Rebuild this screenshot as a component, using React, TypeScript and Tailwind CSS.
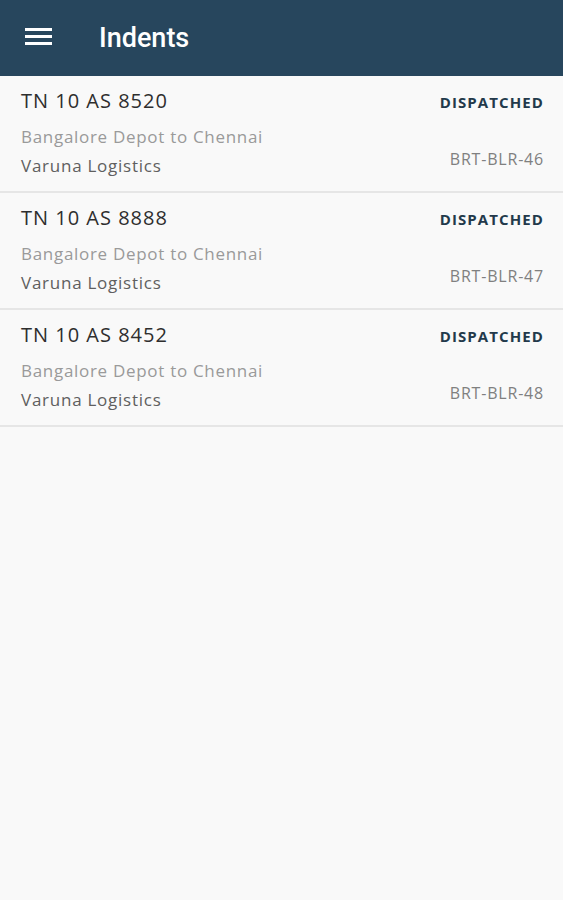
import React from "react";

const rows = [
  { plate: "TN 10 AS 8520", code: "BRT-BLR-46" },
  { plate: "TN 10 AS 8888", code: "BRT-BLR-47" },
  { plate: "TN 10 AS 8452", code: "BRT-BLR-48" },
];

export default function App() {
  return (
    <div className="w-[563px] h-[900px] bg-[#f9f9f9] flex flex-col" style={{ fontFamily: "'Open Sans', sans-serif" }}>
      <header className="h-[76px] bg-[#27465d] flex items-center shrink-0">
        <div className="ml-[25px] -mt-[3px] w-[27px] flex flex-col gap-[4px]">
          <div className="h-[3px] bg-white" />
          <div className="h-[3px] bg-white" />
          <div className="h-[3px] bg-white" />
        </div>
        <h1 className="ml-[47px] text-white text-[27px] leading-[32px] font-medium" style={{ fontFamily: "Roboto, sans-serif" }}>
          Indents
        </h1>
      </header>
      <div className="flex flex-col">
        {rows.map((r) => (
          <div key={r.plate} className="flex justify-between pl-[21px] pr-[20px] pt-[13px] pb-[14px] border-b-2 border-[#e6e6e6]">
            <div className="flex flex-col">
              <div className="text-[20px] leading-[24px] tracking-[1px] text-[#2e2e2e]">{r.plate}</div>
              <div className="mt-[13px] text-[17px] leading-[22px] tracking-[0.7px] text-[#9a9a9a]">Bangalore Depot to Chennai</div>
              <div className="mt-[7px] text-[17px] leading-[22px] tracking-[0.75px] text-[#5f5f5f]">Varuna Logistics</div>
            </div>
            <div className="flex flex-col items-end -mr-[1px]">
              <div className="mt-[3px] text-[15px] leading-[20px] font-bold tracking-[1.1px] text-[#23394b]">DISPATCHED</div>
              <div className="mt-[36px] text-[16px] leading-[22px] tracking-[0.8px] text-[#808080]">{r.code}</div>
            </div>
          </div>
        ))}
      </div>
    </div>
  );
}
